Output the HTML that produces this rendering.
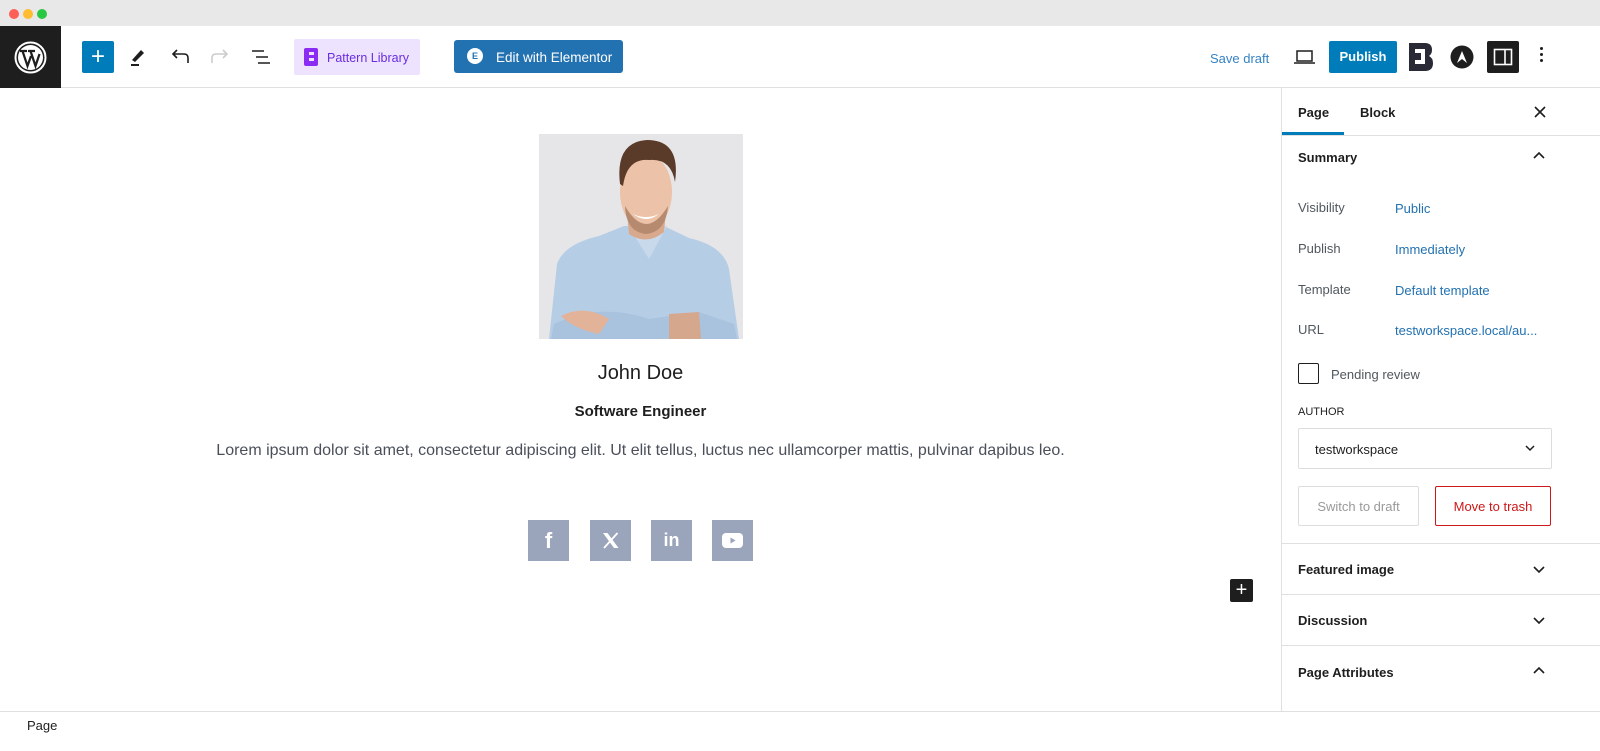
<!DOCTYPE html>
<html><head><meta charset="utf-8"><style>
*{box-sizing:border-box;margin:0;padding:0}
body{width:1600px;height:751px;background:#fff;font-family:"Liberation Sans",sans-serif;position:relative;overflow:hidden;color:#1e1e1e}
.a{position:absolute}
.txt{font-size:13px}
</style></head><body>
<div class="a" style="left:0;top:0;width:1600px;height:26px;background:#e8e8e8"></div>
<div class="a" style="left:9px;top:9px;width:10px;height:10px;border-radius:50%;background:#fe5f57"></div>
<div class="a" style="left:23px;top:9px;width:10px;height:10px;border-radius:50%;background:#febc2e"></div>
<div class="a" style="left:37px;top:9px;width:10px;height:10px;border-radius:50%;background:#28c840"></div>
<div class="a" style="left:0;top:26px;width:61px;height:62px;background:#1e1e1e"></div>
<svg class="a" style="left:14px;top:41px" width="33" height="33" viewBox="0 0 33 33"><circle cx="16.5" cy="16.5" r="15" fill="none" stroke="#fff" stroke-width="2"/><circle cx="16.5" cy="16.5" r="12.5" fill="#fff"/><path d="M6 10h7M8.5 10l5 15 3.5-10M14 10h7M16.5 10l5 15 4-12" stroke="#1e1e1e" stroke-width="2.2" fill="none"/></svg>
<div class="a" style="left:61px;top:87px;width:1539px;height:1px;background:#e0e0e0"></div>
<div class="a" style="left:82px;top:41px;width:32px;height:32px;background:#007cba;border-radius:2px;color:#fff;font-size:24px;line-height:31px;text-align:center">+</div>
<svg class="a" style="left:128px;top:46px" width="20" height="22"><path d="M4 14 L13 4 L16 7 L7 16Z" fill="#1e1e1e"/><rect x="3" y="18" width="8" height="2" fill="#1e1e1e"/></svg>
<svg class="a" style="left:168px;top:47px" width="24" height="20"><path d="M20 16 V11 Q20 7 16 7 H5 M9 3 L5 7 L9 11" stroke="#1e1e1e" stroke-width="1.6" fill="none"/></svg>
<svg class="a" style="left:208px;top:47px" width="24" height="20"><path d="M4 16 V11 Q4 7 8 7 H19 M15 3 L19 7 L15 11" stroke="#ccc" stroke-width="1.6" fill="none"/></svg>
<svg class="a" style="left:250px;top:48px" width="24" height="18"><path d="M2 3h12M6 9h12M8 15h12" stroke="#1e1e1e" stroke-width="1.6"/></svg>
<div class="a" style="left:294px;top:39px;width:126px;height:36px;background:#ede3fe;border-radius:2px"></div>
<svg class="a" style="left:304px;top:48px" width="16" height="18"><rect x="0" y="0" width="14" height="18" rx="2" fill="#8b2cf5"/><rect x="5" y="4" width="5" height="3" fill="#ede3fe"/><rect x="5" y="10" width="5" height="3" fill="#ede3fe"/></svg>
<div class="a" style="left:327px;top:51px;color:#6a2de0;font-size:12.5px">Pattern Library</div>
<div class="a" style="left:454px;top:40px;width:169px;height:33px;background:#2271b1;border-radius:3px"></div>
<div class="a" style="left:467px;top:48px;width:16px;height:16px;border-radius:50%;background:#fff;color:#2271b1;font-size:9px;line-height:16px;text-align:center;font-weight:bold">E</div>
<div class="a" style="left:496px;top:50px;color:#fff;font-size:13.5px">Edit with Elementor</div>
<div class="a txt" style="left:1210px;top:51px;color:#3582c4">Save draft</div>
<svg class="a" style="left:1294px;top:49px" width="22" height="16"><rect x="3" y="2" width="15" height="10" fill="none" stroke="#1e1e1e" stroke-width="1.5"/><path d="M0 14h21" stroke="#1e1e1e" stroke-width="1.5"/></svg>
<div class="a" style="left:1329px;top:41px;width:68px;height:32px;background:#007cba;border-radius:2px;color:#fff;font-size:13px;font-weight:bold;line-height:32px;text-align:center">Publish</div>
<svg class="a" style="left:1409px;top:43px" width="24" height="28"><path d="M0 0h16q7 0 7 7q0 4-3 6q4 2 4 7q0 8-8 8H0Z" fill="#2a2a36"/><rect x="6" y="6" width="8" height="4" fill="#fff"/><rect x="6" y="17" width="8" height="4" fill="#fff"/><rect x="12" y="6" width="4" height="15" fill="#fff"/></svg>
<svg class="a" style="left:1450px;top:45px" width="24" height="24"><circle cx="12" cy="12" r="11.5" fill="#1e1e1e"/><path d="M7 18 L12 6 L17 18 L12 14Z" fill="#fff"/></svg>
<div class="a" style="left:1487px;top:41px;width:32px;height:32px;background:#1e1e1e;border-radius:2px"></div>
<svg class="a" style="left:1492px;top:46px" width="22" height="22"><rect x="2.5" y="3.5" width="17" height="15" fill="none" stroke="#fff" stroke-width="1.6"/><path d="M13 3.5v15" stroke="#fff" stroke-width="1.6"/></svg>
<div class="a" style="left:1540px;top:47px;width:3px;height:3px;background:#1e1e1e;border-radius:50%;box-shadow:0 6px 0 #1e1e1e,0 12px 0 #1e1e1e"></div>

<svg class="a" style="left:539px;top:134px" width="204" height="205" viewBox="0 0 204 205">
<rect width="204" height="205" fill="#e6e6e8"/>
<path d="M10 205 L18 130 Q25 110 60 102 L85 92 L125 92 L150 104 Q185 112 190 135 L200 205Z" fill="#b6cde6"/>
<path d="M88 90 L110 125 L128 92Z" fill="#c9d9ec"/>
<path d="M88 78 L90 100 Q108 112 125 98 L127 78Z" fill="#d9a98d"/>
<ellipse cx="107" cy="58" rx="26" ry="38" fill="#ecc2a8"/>
<path d="M81 50 Q76 8 108 6 Q142 6 136 48 Q132 24 110 26 Q88 24 84 52Z" fill="#5a3a28"/>
<path d="M86 72 Q107 108 129 72 Q127 98 107 100 Q87 98 86 72Z" fill="#b58a6e"/>
<path d="M94 80 Q107 90 120 80 Q107 86 94 80Z" fill="#fff"/>
<path d="M15 190 Q60 168 110 185 L160 178 L195 190 L198 205 L12 205Z" fill="#a9c2de"/>
<path d="M22 182 Q45 170 70 185 L60 200 Q35 195 22 182Z" fill="#e3b399"/>
<path d="M130 180 L160 178 L162 205 L130 205Z" fill="#d5a78c"/>
</svg>
<div class="a" style="left:0;top:362px;width:1281px;text-align:center;font-size:20px;color:#1e1e1e">John Doe</div>
<div class="a" style="left:0;top:403px;width:1281px;text-align:center;font-size:15px;font-weight:bold;color:#1e1e1e">Software Engineer</div>
<div class="a" style="left:0;top:442px;width:1281px;text-align:center;font-size:16px;color:#4a4f5a">Lorem ipsum dolor sit amet, consectetur adipiscing elit. Ut elit tellus, luctus nec ullamcorper mattis, pulvinar dapibus leo.</div>
<div class="a" style="left:528px;top:520px;width:41px;height:41px;background:#9aa4bb;color:#fff;font-weight:bold;font-size:22px;text-align:center;line-height:41px">f</div>
<div class="a" style="left:590px;top:520px;width:41px;height:41px;background:#9aa4bb"></div>
<svg class="a" style="left:600px;top:530px" width="21" height="21"><path d="M3 3h4.5l11 15h-4.5Z" fill="#fff"/><path d="M17.5 3L4 18" stroke="#fff" stroke-width="1.8"/></svg>
<div class="a" style="left:651px;top:520px;width:41px;height:41px;background:#9aa4bb;color:#fff;font-weight:bold;font-size:18px;text-align:center;line-height:41px">in</div>
<div class="a" style="left:712px;top:520px;width:41px;height:41px;background:#9aa4bb"></div>
<svg class="a" style="left:722px;top:531px" width="21" height="19"><rect x="0" y="2" width="21" height="15" rx="4" fill="#fff"/><path d="M8.5 6.5v6l5-3z" fill="#9aa4bb"/></svg>
<div class="a" style="left:1230px;top:579px;width:23px;height:23px;background:#1e1e1e;border-radius:2px;color:#fff;font-size:20px;line-height:22px;text-align:center">+</div>

<div class="a" style="left:1281px;top:88px;width:1px;height:623px;background:#e0e0e0"></div>
<div class="a" style="left:1298px;top:105px;font-size:13px;font-weight:bold">Page</div>
<div class="a" style="left:1360px;top:105px;font-size:13px;font-weight:bold">Block</div>
<div class="a" style="left:1282px;top:132px;width:62px;height:3px;background:#007cba"></div>
<div class="a" style="left:1282px;top:135px;width:318px;height:1px;background:#e0e0e0"></div>
<svg class="a" style="left:1533px;top:105px" width="14" height="14"><path d="M2 2l10 10M12 2L2 12" stroke="#1e1e1e" stroke-width="1.6"/></svg>
<div class="a" style="left:1298px;top:150px;font-size:13px;font-weight:bold">Summary</div>
<svg class="a" style="left:1532px;top:150px" width="14" height="10"><path d="M2 8l5-5 5 5" stroke="#1e1e1e" stroke-width="1.6" fill="none"/></svg>
<div class="a txt" style="left:1298px;top:200px;color:#50575e">Visibility</div><div class="a txt" style="left:1395px;top:201px;color:#2271b1">Public</div>
<div class="a txt" style="left:1298px;top:241px;color:#50575e">Publish</div><div class="a txt" style="left:1395px;top:242px;color:#2271b1">Immediately</div>
<div class="a txt" style="left:1298px;top:282px;color:#50575e">Template</div><div class="a txt" style="left:1395px;top:283px;color:#2271b1">Default template</div>
<div class="a txt" style="left:1298px;top:322px;color:#50575e">URL</div><div class="a txt" style="left:1395px;top:323px;color:#2271b1">testworkspace.local/au...</div>
<div class="a" style="left:1298px;top:363px;width:21px;height:21px;border:1.5px solid #1e1e1e;border-radius:2px"></div>
<div class="a txt" style="left:1331px;top:367px;color:#50575e">Pending review</div>
<div class="a" style="left:1298px;top:406px;font-size:11px;color:#1e1e1e">AUTHOR</div>
<div class="a" style="left:1298px;top:428px;width:254px;height:41px;border:1px solid #ddd;border-radius:2px"></div>
<div class="a txt" style="left:1315px;top:442px;color:#1e1e1e">testworkspace</div>
<svg class="a" style="left:1524px;top:444px" width="12" height="8"><path d="M2 2l4 4 4-4" stroke="#1e1e1e" stroke-width="1.5" fill="none"/></svg>
<div class="a txt" style="left:1298px;top:486px;width:121px;height:40px;border:1px solid #ddd;border-radius:2px;color:#999;text-align:center;line-height:39px">Switch to draft</div>
<div class="a txt" style="left:1435px;top:486px;width:116px;height:40px;border:1px solid #cc1818;border-radius:2px;color:#cc1818;text-align:center;line-height:39px">Move to trash</div>
<div class="a" style="left:1282px;top:543px;width:318px;height:1px;background:#e0e0e0"></div>
<div class="a" style="left:1298px;top:562px;font-size:13px;font-weight:bold">Featured image</div>
<svg class="a" style="left:1532px;top:565px" width="14" height="10"><path d="M2 2l5 5 5-5" stroke="#1e1e1e" stroke-width="1.6" fill="none"/></svg>
<div class="a" style="left:1282px;top:594px;width:318px;height:1px;background:#e0e0e0"></div>
<div class="a" style="left:1298px;top:613px;font-size:13px;font-weight:bold">Discussion</div>
<svg class="a" style="left:1532px;top:616px" width="14" height="10"><path d="M2 2l5 5 5-5" stroke="#1e1e1e" stroke-width="1.6" fill="none"/></svg>
<div class="a" style="left:1282px;top:645px;width:318px;height:1px;background:#e0e0e0"></div>
<div class="a" style="left:1298px;top:665px;font-size:13px;font-weight:bold">Page Attributes</div>
<svg class="a" style="left:1532px;top:665px" width="14" height="10"><path d="M2 8l5-5 5 5" stroke="#1e1e1e" stroke-width="1.6" fill="none"/></svg>
<div class="a" style="left:0;top:711px;width:1600px;height:1px;background:#e0e0e0"></div>
<div class="a txt" style="left:27px;top:718px;color:#1e1e1e">Page</div>
</body></html>
